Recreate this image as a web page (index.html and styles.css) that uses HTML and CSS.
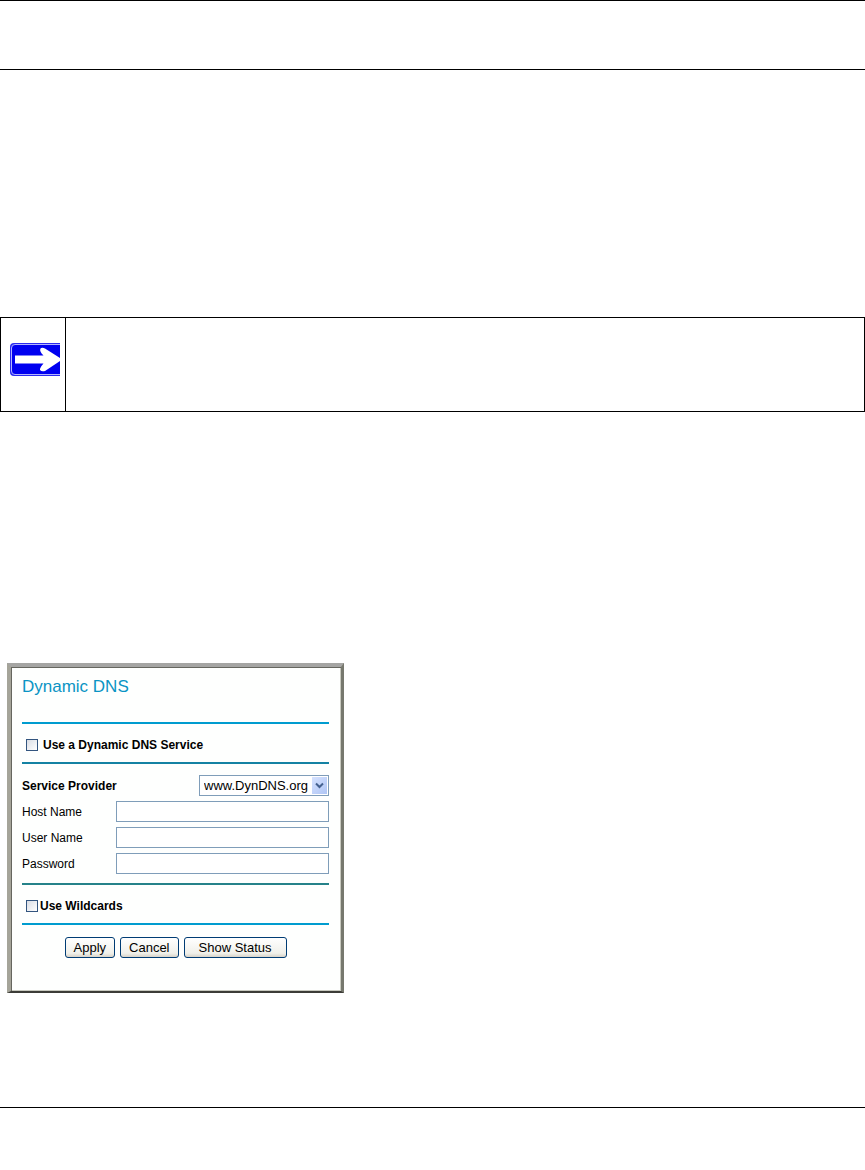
FILE: index.html
```html
<!DOCTYPE html>
<html lang="en">
<head>
  <meta charset="UTF-8">
  <meta name="viewport" content="width=device-width, initial-scale=1.0">
  <title>Dynamic DNS</title>
  <link rel="stylesheet" href="styles.css">
</head>
<body>
  <header class="page-header"></header>

  <main>
    <div class="note">
      <div class="note-icon">
        <svg width="50" height="33" viewBox="0 0 50 33" aria-hidden="true">
          <path d="M50 0H4Q0 0 0 4V29Q0 33 4 33H50Z" fill="#2a2af0"/>
          <path d="M50 1.5H5Q1.5 1.5 1.5 5V28Q1.5 31.500 5 31.500H50" fill="#0000f0" stroke="#b4b4ff"/>
          <path d="M5 12.500H33.500Q29 8 30.500 5.500Q32 4 35 5.500L50 15V18L35 28Q31.500 29 30 27Q29.500 25 33.500 20.500H5Z" fill="#fff"/>
        </svg>
      </div>
      <div class="note-text"></div>
    </div>

    <form class="panel">
      <h1 class="title">Dynamic DNS</h1>

      <div class="check-row">
        <input type="checkbox" id="useService" class="checkbox">
        <label for="useService">Use a Dynamic DNS Service</label>
      </div>

      <div class="fields">
        <div class="field">
          <label for="provider" class="strong">Service Provider</label>
          <div class="select-box">
            <select id="provider">
              <option>www.DynDNS.org</option>
            </select>
            <svg class="select-arrow" width="15" height="17" viewBox="0 0 15 17" aria-hidden="true">
              <path d="M4 6.500L7.500 10L11 6.500" fill="none" stroke="#44618f" stroke-width="2"/>
            </svg>
          </div>
        </div>
        <div class="field">
          <label for="hostName">Host Name</label>
          <input type="text" id="hostName" class="text-input">
        </div>
        <div class="field">
          <label for="userName">User Name</label>
          <input type="text" id="userName" class="text-input">
        </div>
        <div class="field">
          <label for="password">Password</label>
          <input type="password" id="password" class="text-input">
        </div>
      </div>

      <div class="check-row wildcards">
        <input type="checkbox" id="useWildcards" class="checkbox">
        <label for="useWildcards">Use Wildcards</label>
      </div>

      <div class="buttons">
        <button type="submit" class="button">Apply</button>
        <button type="reset" class="button">Cancel</button>
        <button type="button" class="button status-button">Show Status</button>
      </div>
    </form>
  </main>

  <footer class="page-footer"></footer>
</body>
</html>
```
FILE: styles.css
```css
* {
  box-sizing: border-box;
}
body {
  margin: 0;
  background: #fff;
  color: #000;
  font-family: "Liberation Sans", Arial, sans-serif;
  font-size: 12px;
}
.page-header {
  height: 70px;
  border-top: 1px solid #000;
  border-bottom: 1px solid #000;
}
.note {
  display: flex;
  min-height: 95px;
  margin-top: 247px;
  border: 1px solid #000;
}
.note-icon {
  display: flex;
  align-items: flex-start;
  padding: 25px 5px 0 9px;
  border-right: 1px solid #000;
}
.note-text {
  flex: 1;
}
.panel {
  max-width: 337px;
  margin: 251px 7px 0;
  padding: 10px 12px 33px 11px;
  background: #fefffe;
  border-style: solid;
  border-width: 4px 3px 2px 4px;
  border-color: #a5a5a3 #77786e #3c3c37 #a5a499;
  box-shadow: inset 1px 1px 0 #66665f, inset -1px -1px 0 #c9cac0;
}
.title {
  margin: 0 0 25px;
  color: #0a94c4;
  font-size: 17px;
  font-weight: normal;
  line-height: 20px;
}
.check-row {
  display: flex;
  align-items: center;
  gap: 5px;
  height: 42px;
  padding: 4px 4px 0;
  border-top: 2px solid #009ccf;
  border-bottom: 2px solid #1482a3;
  font-weight: bold;
}
.wildcards {
  gap: 2px;
  border-top-color: #258289;
  border-bottom-color: #009ccf;
}
.checkbox {
  appearance: none;
  width: 12px;
  height: 12px;
  margin: 0;
  border: 1px solid #33557f;
  background: linear-gradient(135deg, #d9dde4, #fff);
}
.checkbox:checked {
  background: #21a121;
}
.fields {
  display: flex;
  flex-direction: column;
  gap: 5px;
  padding: 11px 0 9px;
}
.field {
  display: flex;
  align-items: center;
  justify-content: space-between;
}
.strong {
  font-weight: bold;
}
.text-input {
  width: 213px;
  height: 21px;
  margin: 0;
  padding: 1px 4px;
  border: 1px solid #7f9db9;
  background: #fff;
  font: inherit;
}
.select-box {
  position: relative;
  width: 130px;
}
.select-box select {
  appearance: none;
  display: block;
  width: 100%;
  height: 21px;
  margin: 0;
  padding: 0 18px 0 4px;
  border: 1px solid #7f9db9;
  border-radius: 0;
  background: #fff;
  color: #000;
  font-family: inherit;
  font-size: 13px;
}
.select-arrow {
  position: absolute;
  top: 2px;
  right: 2px;
  background: linear-gradient(135deg, #d5e2ff, #afc5f4);
  pointer-events: none;
}
.buttons {
  display: flex;
  justify-content: center;
  gap: 5px;
  padding-top: 12px;
}
.button {
  height: 21px;
  margin: 0;
  padding: 0 8px;
  border: 1px solid #003c74;
  border-radius: 3px;
  background: linear-gradient(#fff, #f0f0ea 80%, #d8d3c8);
  color: #000;
  font-family: inherit;
  font-size: 13px;
}
.status-button {
  padding: 0 14px;
}
.page-footer {
  height: 62px;
  margin-top: 114px;
  border-top: 1px solid #000;
}
```
